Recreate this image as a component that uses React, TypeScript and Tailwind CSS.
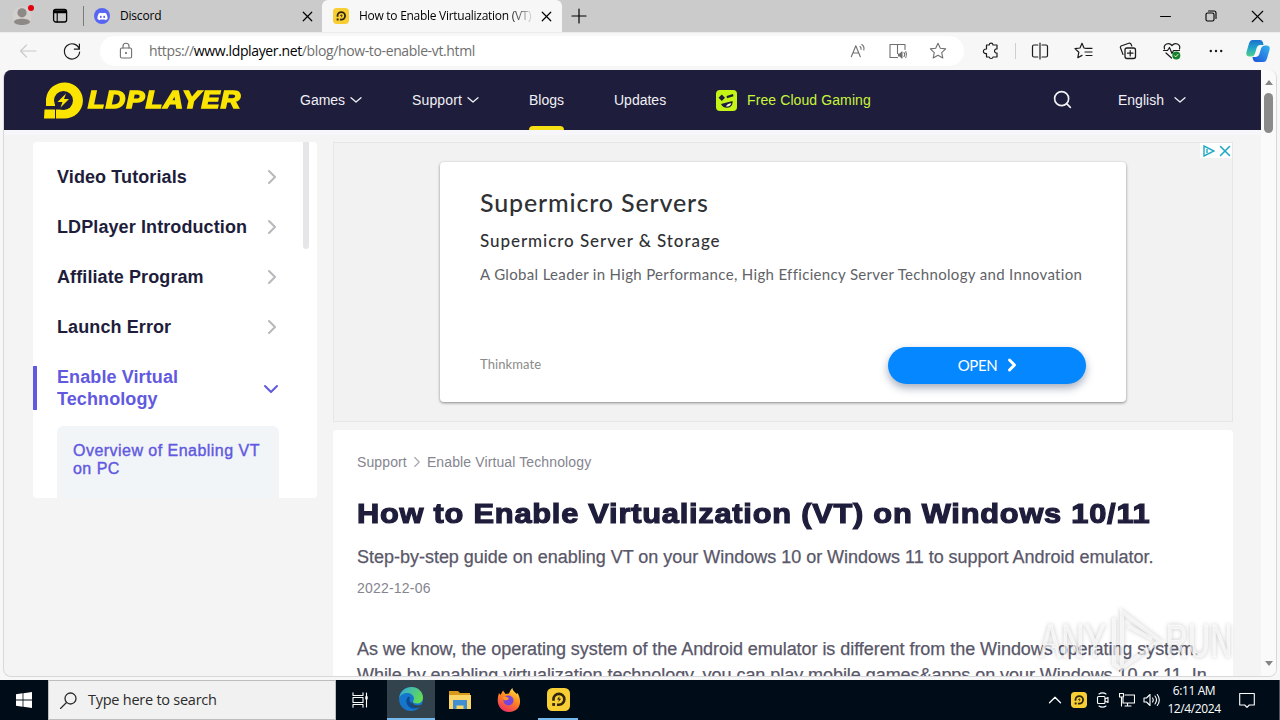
import type { ReactNode } from "react";
import { ChevronDown, ChevronRight, ChevronUp, Minus, Plus, Search, X } from "lucide-react";
import { FaDiscord } from "react-icons/fa";

const ui = "font-['Open_Sans','Noto_Sans',sans-serif]";
const arial = "font-['Liberation_Sans',Arial,sans-serif]";
const product = "font-['Lato','Roboto',sans-serif]";

const sections = ["Video Tutorials", "LDPlayer Introduction", "Affiliate Program", "Launch Error"];

function LdMark({ className, fill = "#fbe500", hole = "#1e1d3b" }: { className?: string; fill?: string; hole?: string }) {
  return (
    <svg viewBox="0 0 39 37" className={className}>
      <path d="M2 24V17A18.5 18 0 1 1 20 36.5H12V27.5H20A8.5 8.5 0 1 0 11 18V24Z" fill={fill} />
      <path d="M0.5 27.5H11V36.5H0Z" fill={fill} />
      <circle cx="19.5" cy="18.5" r="9.5" fill={hole} />
      <path d="M22 11.5 13.5 20H18.5L16.5 25.5 25 17H20Z" fill={fill} />
    </svg>
  );
}

/* Yellow rounded app icon, used in tab and taskbar */
function LdApp({ className }: { className?: string }) {
  return (
    <svg viewBox="0 0 22 22" className={className}>
      <rect width="22" height="22" rx="5" fill="#f7cf35" />
      <path d="M6.2 12.2V10.8A5.2 5.2 0 1 1 11.4 16H9.5" fill="none" stroke="#30240f" strokeWidth="2.5" />
      <path d="M5 14.4h2.7v2.7H5Z" fill="#30240f" />
      <path d="m11.8 8-2.2 3h1.8l-.6 2.4 2.8-3.2h-1.8Z" fill="#30240f" />
    </svg>
  );
}

function Stroke({ children, className, box = "0 0 20 20" }: { children: ReactNode; className?: string; box?: string }) {
  return (
    <svg viewBox={box} className={className} fill="none" stroke="currentColor" strokeWidth="1.1" strokeLinejoin="round" strokeLinecap="round">
      {children}
    </svg>
  );
}

function NavArrow({ className }: { className?: string }) {
  return (
    <Stroke className={className} box="0 0 14 14">
      <path d="m2 4.700 5 4.300 5-4.300" strokeWidth="1.300" />
    </Stroke>
  );
}

function TabStrip() {
  return (
    <div className={`flex h-8 shrink-0 items-center bg-[#cbcbcb] text-[12px] text-black ${ui}`}>
      <div className="relative ml-3 h-5 w-5">
        <svg viewBox="0 0 20 20" className="h-5 w-5">
          <circle cx="10" cy="10" r="9.5" fill="#d3d0cd" />
          <circle cx="10" cy="6.8" r="4.600" fill="#8c8987" />
          <path d="M2 16C2 11.500 18 11.500 18 16 17 20 3 20 2 16Z" fill="#8c8987" />
        </svg>
        <span className="absolute -top-[1px] left-4 h-1.5 w-1.5 rounded-full bg-[#e3000f]" />
      </div>
      <Stroke className="ml-[20px] h-4 w-4" box="0 0 16 16">
        <rect x="1.6" y="1.500" width="13" height="12.5" rx="2.2" strokeWidth="1.3" />
        <path d="M2.300 3.200h11.600M2.300 4.400h11.600" strokeWidth="1.800" />
        <path d="M5.2 5v9" />
      </Stroke>
      <div className="ml-[15px] h-5 w-px bg-[#7b7b7b]" />
      <div className="ml-[10px] flex h-4 w-4 items-center justify-center rounded-full bg-[#5865f2] text-white">
        <FaDiscord size={11} />
      </div>
      <span className="ml-[10px] w-[179px] tracking-[-0.2px]">Discord</span>
      <X className="h-[17px] w-[17px]" strokeWidth={1.700} />
      <div className="ml-[6px] flex h-8 w-[240px] items-center rounded-t-md bg-[#f7f7f7]">
        <LdApp className="ml-[11px] h-4 w-4" />
        <span className="ml-[10px] w-[174px] whitespace-nowrap tracking-[-0.28px] [mask-image:linear-gradient(90deg,#000_150px,transparent_176px)]">
          How to Enable Virtualization (VT)
        </span>
        <X className="ml-[5px] h-[17px] w-[17px]" strokeWidth={1.700} />
      </div>
      <Plus className="ml-[5px] h-6 w-6" strokeWidth={1.200} />
      <Minus className="ml-auto h-[17px] w-[17px]" strokeWidth={1.500} />
      <Stroke className="ml-[31px] h-[12px] w-[12px]" box="0 0 12 12">
        <rect x="1" y="3" width="8" height="8" rx="1.5" />
        <path d="M3.5 1H9a2 2 0 0 1 2 2v5.5" />
      </Stroke>
      <X className="mr-[12px] ml-[30px] h-[21px] w-[21px]" strokeWidth={1.300} />
    </div>
  );
}

function Toolbar() {
  return (
    <div className={`flex h-[38px] shrink-0 items-center border-t border-[#ececec] bg-[#f7f7f7] pb-px text-[#1b1b1b] ${ui}`}>
      <Stroke className="ml-[18px] h-5 w-5 text-[#c9c9c9]">
        <path d="M18 10H2.5M8.5 4 2.5 10l6 6" />
      </Stroke>
      <Stroke className="ml-[24px] h-5 w-5">
        <path d="M17.3 8.2A7.6 7.6 0 1 0 17.6 11M17.4 3v5.2h-5" strokeWidth="1.200" />
      </Stroke>
      <div className="ml-[18px] flex h-[30px] w-[864px] items-center rounded-full bg-white text-[#6f6f6f]">
        <Stroke className="ml-[16px] h-5 w-5">
          <rect x="4.4" y="7" width="11.2" height="10" rx="1.5" />
          <path d="M7 7V5.2a3 3 0 0 1 6 0V7" />
          <circle cx="10" cy="12" r=".5" fill="currentColor" />
        </Stroke>
        <span className="ml-[13px] w-[697px] pb-px whitespace-nowrap text-[14px] tracking-[-0.37px]">
          https://<span className="text-black">www.ldplayer.net</span>/blog/how-to-enable-vt.html
        </span>
        <Stroke className="ml-[2px] h-5 w-5">
          <path d="m3.3 15.8 4.5-11 4.5 11M4.8 12h6M12 5.5c1 .7 1.3 1.800 1 3M13.800 3.500c2 1.400 2.500 3.400 2 5.500" />
        </Stroke>
        <Stroke className="ml-[20px] h-5 w-5">
          <path d="M9.500 16.500H2V3.500h7.500v9M9.500 3.500H17v5" />
          <path d="M10.500 13h1.500l2-2v6l-2-2h-1.500Z" fill="currentColor" />
          <path d="M16 11.500c.8 1 .8 3 0 4M17.800 10.500c1 2 1 4 0 6" />
        </Stroke>
        <Stroke className="ml-[20px] h-5 w-5">
          <path d="m10 2.300 2.300 5 5.400.6-4 3.700 1.100 5.400-4.800-2.700L5.200 17l1.100-5.400-4-3.700 5.400-.6Z" />
        </Stroke>
      </div>
      <Stroke className="ml-[17px] h-5 w-5">
        <path d="M5.500 4h2.700c.2-2.400 3.600-2.400 3.800 0H16v4c-3-.5-3.600 4 0 4v4h-4c-.3 2-3.500 2-3.800 0H5.500v-3.500C1.500 13.200 1.300 7.700 5.500 8Z" strokeWidth="1.2" />
      </Stroke>
      <div className="ml-[14px] h-4 w-px bg-[#cfcfcf]" />
      <Stroke className="ml-[14px] h-5 w-5">
        <path d="M7.800 4H4Q2.500 4 2.500 5.500v9Q2.500 16 4 16h3.800M12 4h4q1.500 0 1.500 1.500v9q0 1.500-1.500 1.500h-4M10 2v16" strokeWidth="1.200" />
      </Stroke>
      <Stroke className="ml-[24px] h-5 w-5">
        <path d="M12 7.500 10 7 8 2.300 6 7l-5 .6 3.800 3.700-1 5.400L8 14.400M12 7.300h6M11 11h7M12 14.500h6" strokeWidth="1.200" />
      </Stroke>
      <Stroke className="ml-[24px] h-5 w-5">
        <rect x="7" y="7" width="10.500" height="10.500" rx="2" strokeWidth="1.300" />
        <path d="M12.200 9.500v5.500M9.500 12.200H15M5 13.500 2.300 6.300 3 5l8.500-3 1.300.700 1 2.300" strokeWidth="1.200" />
      </Stroke>
      <Stroke className="ml-[24px] h-5 w-5">
        <path d="M2.500 8C1 3 7 .8 10 4.500 13 .8 19 3 17.500 8M1.500 9.500h4l2-3 2.500 6 1.500-3h6M4 12l5.500 5" strokeWidth="1.200" />
        <circle cx="14.300" cy="14.500" r="4" fill="#18802a" stroke="none" />
        <path d="m12.500 14.700 1.200 1.200 2.300-2.500" stroke="#fff" strokeWidth=".900" />
      </Stroke>
      <svg viewBox="0 0 20 20" className="ml-[24px] h-5 w-5" fill="currentColor">
        <circle cx="4.800" cy="10" r="1.200" />
        <circle cx="10" cy="10" r="1.200" />
        <circle cx="15.200" cy="10" r="1.200" />
      </svg>
      <svg viewBox="0 0 24 24" className="ml-[20px] h-6 w-6">
        <defs>
          <linearGradient id="cpA" x1="0" y1="0" x2="0" y2="1">
            <stop offset="0" stopColor="#1b6fd0" />
            <stop offset=".5" stopColor="#22a6c8" />
            <stop offset="1" stopColor="#4fd18b" />
          </linearGradient>
          <linearGradient id="cpB" x1="1" y1="0" x2="0" y2="1">
            <stop offset="0" stopColor="#35b4f0" />
            <stop offset="1" stopColor="#1d50d8" />
          </linearGradient>
        </defs>
        <path d="M6.500 1H14q2 0 2.800 2l.8 3H14q-2.500 0-3.300 2.800L8.800 15Q8 17.500 5 17.500H3.500Q-.5 17.500.5 13L3 4.500Q4 1 6.500 1Z" fill="url(#cpA)" />
        <path d="M17.500 23H10q-2 0-2.800-2l-.8-3H10q2.500 0 3.300-2.800L15.200 9Q16 6.500 19 6.500h1.500q4 0 3 4.500L21 19.500Q20 23 17.500 23Z" fill="url(#cpB)" />
      </svg>
    </div>
  );
}

function SiteNav() {
  return (
    <nav className="flex h-[60px] shrink-0 items-center whitespace-nowrap bg-[#1e1d3b] text-[14px] text-[#f0f0f5]">
      <div className="ml-10 flex w-[256px] items-center">
        <LdMark className="h-[37px] w-[39px]" />
        <span className="ml-[5px] origin-left scale-x-[1.1] text-[24.5px] leading-none font-bold tracking-[1.15px] text-[#fbe500] italic [-webkit-text-stroke:1.7px_#fbe500]">LDPLAYER</span>
      </div>
      <div className="flex w-[112px] items-center">
        Games <NavArrow className="ml-[4px] h-[14px] w-[14px]" />
      </div>
      <div className="flex w-[117px] items-center tracking-[0.15px]">
        Support <NavArrow className="ml-[4px] h-[14px] w-[14px]" />
      </div>
      <div className="relative flex h-full w-[85px] items-center">
        Blogs
        <span className="absolute bottom-0 left-0 h-1 w-[35px] rounded-t bg-[#f5e015]" />
      </div>
      <div className="w-[102px]">Updates</div>
      <svg viewBox="0 0 21 21" className="h-[21px] w-[21px]">
        <rect width="21" height="21" rx="4" fill="#c5f516" />
        <path d="M5.800 4.500 9 7.700 5.800 11 2.500 7.700ZM10.500 6l6.500-2 .5 2.300-6.500 1.900Z" fill="#1e1d3b" />
        <path d="M5 14 16.500 11c.5 3-1 6.500-5 6.800-2.800.2-5-1-6.500-3.800Z" fill="#1e1d3b" />
        <path d="M10 16.200c1-2 3-3 5.300-3-.5 2.300-2.500 3.700-5.300 3Z" fill="#eef8d0" />
      </svg>
      <span className="ml-[10px] w-[306px] tracking-[0.1px] text-[#c9f53c]">Free Cloud Gaming</span>
      <Search className="-ml-px h-[21px] w-[21px] -translate-y-px" strokeWidth={1.900} />
      <span className="ml-[45px] w-[55px]">English</span>
      <NavArrow className="h-[14px] w-[14px]" />
    </nav>
  );
}

function Sidebar() {
  return (
    <aside className="flex h-[356px] w-[284px] shrink-0 overflow-hidden rounded bg-white">
      <div className="flex w-[246px] flex-col text-[18px] font-bold tracking-[0.1px] text-[#1e1d3b]">
        {sections.map((s, i) => (
          <div key={s} className={`flex h-[22px] items-center justify-between pl-6 ${i ? "mt-7" : "mt-[24px]"}`}>
            {s}
            <ChevronRight className="-mr-[5px] h-6 w-6 text-[#b9b9bd]" strokeWidth={2.100} />
          </div>
        ))}
        <div className="mt-7 flex h-11 items-center justify-between border-l-4 border-[#6159e0] pl-5 leading-[22px] text-[#6159e0]">
          <span>
            Enable Virtual
            <br />
            Technology
          </span>
          <ChevronDown className="-mr-1 h-6 w-6 translate-y-px" strokeWidth={2} />
        </div>
        <div className="mt-4 ml-6 h-[80px] rounded-t-md bg-[#f2f5f8] px-4 pt-4 text-[16px] leading-[18px] font-normal tracking-[0.47px] whitespace-nowrap text-[#6159e0] [-webkit-text-stroke:0.4px_#6159e0]">
          Overview of Enabling VT
          <br />
          on PC
        </div>
      </div>
      <div className="ml-[24px] h-[107px] w-[6px] rounded-b bg-[#e6e6e8]" />
    </aside>
  );
}

function Advert() {
  return (
    <div className="relative h-[280px] shrink-0 border border-[#e6e6e6] bg-[#f2f2f2] pt-[19px] pl-[106px]">
      <div className={`flex h-[240px] w-[686px] flex-col rounded bg-white px-10 whitespace-nowrap shadow-[0_1px_3px_rgba(0,0,0,0.45)] ${product}`}>
        <h2 className="mt-[25px] text-[25px] leading-[30px] font-medium tracking-[0.85px] text-[#303134]">Supermicro Servers</h2>
        <h3 className="mt-[13px] text-[17px] leading-[22px] font-medium tracking-[0.94px] text-[#303134]">Supermicro Server &amp; Storage</h3>
        <p className="mt-[12px] text-[15px] leading-5 tracking-[0.33px] text-[#5f6368]">
          A Global Leader in High Performance, High Efficiency Server Technology and Innovation
        </p>
        <div className="mt-[63px] flex items-center justify-between">
          <span className="pb-[2px] text-[13px] tracking-[0.1px] text-[#8a8a8a]">Thinkmate</span>
          <div className="flex h-[37px] w-[198px] items-center justify-center rounded-full bg-[#0587ff] pb-px pl-[6px] text-[15px] text-white shadow-[0_4px_9px_rgba(30,50,90,0.4)]">
            <span className="tracking-[-0.4px]">OPEN</span>
            <ChevronRight className="ml-[5px] h-5 w-5" strokeWidth={3.600} />
          </div>
        </div>
      </div>
      <div className="absolute top-0 right-0 flex h-[15px] w-[32px] items-center gap-px bg-white pl-[3px] text-[#1fa9c4]">
        <svg viewBox="0 0 12 12" className="h-[12px] w-[12px] shrink-0" fill="none" stroke="currentColor" strokeWidth="1.400">
          <path d="M1 1v10l10-5ZM4 4v4" />
        </svg>
        <X className="-mr-[3px] h-[18px] w-[18px] shrink-0" strokeWidth={2.100} />
      </div>
    </div>
  );
}

function Article() {
  return (
    <article className="mt-[8px] flex-1 rounded-t bg-white pl-6 whitespace-nowrap text-[#595769]">
      <div className="mt-[24px] flex h-4 items-center text-[14px] tracking-[0.12px] text-[#85858f]">
        Support
        <ChevronRight className="mx-px h-[18px] w-[18px] text-[#a5a5ad]" strokeWidth={1.500} />
        Enable Virtual Technology
      </div>
      <h1 className="mt-[26px] origin-left scale-x-[1.1] text-[28px] leading-[36px] font-black tracking-[0.69px] text-[#1e1d3b] [-webkit-text-stroke:1.2px_#1e1d3b]">
        How to Enable Virtualization (VT) on Windows 10/11
      </h1>
      <p className="mt-[13px] text-[18px] leading-[24px] tracking-[-0.015px] [-webkit-text-stroke:0.25px_#595769]">
        Step-by-step guide on enabling VT on your Windows 10 or Windows 11 to support Android emulator.
      </p>
      <time className="mt-[11px] block text-[14px] leading-4 tracking-[0.2px] text-[#85858f]">2022-12-06</time>
      <p className="mt-[40px] text-[18px] leading-[26px] tracking-[-0.05px] [-webkit-text-stroke:0.25px_#595769]">
        As we know, the operating system of the Android emulator is different from the Windows operating system.
        <br />
        While by enabling virtualization technology, you can play mobile games&amp;apps on your Windows 10 or 11. In
      </p>
    </article>
  );
}

function Watermark() {
  return (
    <div className="absolute top-[538px] left-[1036px] flex h-[66px] items-center text-[46px] leading-none text-white/65 drop-shadow-[0_0_2px_rgba(0,0,0,0.3)]">
      <span className="w-[66px] origin-left scale-x-[0.68] tracking-[1px] [-webkit-text-stroke:1px_rgba(255,255,255,0.6)]">ANY</span>
      <svg viewBox="0 0 58 66" className="h-[66px] w-[58px]" fill="none" stroke="currentColor" strokeWidth="4">
        <path d="M16 4v56l38-27ZM8 10v46l9 6M22 18l24 13" />
      </svg>
      <span className="ml-[2px] origin-left scale-x-[0.65] tracking-[1px] [-webkit-text-stroke:1px_rgba(255,255,255,0.6)]">RUN</span>
    </div>
  );
}

function Taskbar() {
  return (
    <footer className={`flex h-10 shrink-0 items-center bg-[#000d18] text-white ${ui}`}>
      <div className="flex h-full w-12 items-center justify-center">
        <svg viewBox="0 0 16 16" className="h-4 w-4" fill="#fff">
          <path d="M0 2.300 6.600 1.300v6.300H0ZM7.400 1.200 16 0v7.600H7.400ZM0 8.400h6.600v6.300L0 13.700ZM7.400 8.400H16V16l-8.600-1.200Z" />
        </svg>
      </div>
      <div className="flex h-full w-[288px] items-center border border-[#bdbdbd] bg-[#f1f1f1] text-[#2b2b2b]">
        <Stroke className="ml-[11px] h-[17px] w-[17px]" box="0 0 17 17">
          <circle cx="10.500" cy="6.500" r="5.500" strokeWidth="1.300" />
          <path d="m6.500 10.500-6 6" strokeWidth="1.300" />
        </Stroke>
        <span className="ml-[11px] text-[14.500px] tracking-[-0.25px] whitespace-nowrap">Type here to search</span>
      </div>
      <div className="flex h-full w-[51px] items-center justify-center">
        <Stroke className="-ml-[4px] h-4 w-4" box="0 0 16 16">
          <path d="M1 .8v2.700h10V.8M1 15.200v-2.700h10v2.700M1 5.500h10v5H1ZM14.500 1v14" />
          <path d="M14.500 5v1.500" strokeWidth="2.400" />
        </Stroke>
      </div>
      <div className="flex h-full w-12 items-center justify-center border-b-2 border-[#76b9ed] bg-[#33434d]">
        <svg viewBox="0 0 24 24" className="h-6 w-6">
          <defs>
            <linearGradient id="edgeTop" x1="0" y1="0" x2="1" y2=".5">
              <stop offset="0" stopColor="#2fa7e0" />
              <stop offset="1" stopColor="#62d957" />
            </linearGradient>
          </defs>
          <circle cx="12" cy="12" r="12" fill="#1576cc" />
          <path d="M.2 11C1.500 3.500 7 0 12.500 0 19 0 24 5 24 10.500c0 4-3 6-6 6-2.500 0-4-1-4-2 0-.8 1-1.200 1-3C15 8 11 6 8 6 4 6 1 8.500.2 11Z" fill="url(#edgeTop)" />
          <path d="M9.500 9.500C5 13 8 20.500 13.500 21.500 17 22 20.500 20 22 18.500 15 20.500 8.500 15 11 10.500Z" fill="#0c4b93" />
          <path d="M22.500 17.500c-3 1.500-9 1.500-9.500-3l-1 2c1 4 6 5 9 3.500Z" fill="#33434d" />
        </svg>
      </div>
      <div className="flex h-full w-[49px] items-center justify-center">
        <svg viewBox="0 0 22 20" className="h-5 w-[22px]">
          <path d="M0 1h9l2 2h10v4H0Z" fill="#d99a1c" />
          <path d="M0 5h22v14H0Z" fill="#fbd667" />
          <path d="M4 10h14v9h-3.500v-3.500h-7V19H4Z" fill="#3f8fd2" />
        </svg>
      </div>
      <div className="flex h-full w-[49px] items-center justify-center">
        <svg viewBox="0 0 24 24" className="h-6 w-6">
          <defs>
            <linearGradient id="fox" x1=".8" y1="0" x2=".3" y2="1">
              <stop offset="0" stopColor="#ffe14a" />
              <stop offset=".45" stopColor="#ff8a1e" />
              <stop offset="1" stopColor="#ee2f62" />
            </linearGradient>
          </defs>
          <path d="M2 5 3.500 7 6 2.500 8.500 6 12 5.500C13 3 14 1 15.500 0c0 3 3 4 4 6l1-1c5 8 3 19-8.500 19C2 24-1.500 14 2 5Z" fill="url(#fox)" />
          <circle cx="11.500" cy="12.500" r="5" fill="#7744dc" />
          <path d="M5.500 10.500c2-3 5-1.500 6.500 0-1 2-3 1.500-4 2Z" fill="#ff9726" />
        </svg>
      </div>
      <div className="ml-[5px] flex h-full w-10 items-center justify-center border-b-2 border-[#76b9ed]">
        <LdApp className="h-[23px] w-[23px]" />
      </div>
      <ChevronUp className="ml-auto h-[22px] w-[22px]" strokeWidth={1.400} />
      <LdApp className="ml-[5px] h-4 w-4" />
      <Stroke className="ml-[8px] h-4 w-4" box="0 0 16 16">
        <rect x="2.500" y="4.500" width="7.500" height="7" rx="1" />
        <path d="m10 7 3-1.500v5L10 9M4 2c2-1.300 5-1.300 7 0M4 14c2 1.300 5 1.300 7 0" />
      </Stroke>
      <Stroke className="ml-[8px] h-4 w-4" box="0 0 16 16">
        <path d="M6 3h9.500v8H4V6M8.500 11v3M6 14h6M.500 1.500h4V5h-4ZM2.500 5v9" />
      </Stroke>
      <Stroke className="ml-[8px] h-4 w-[17px]" box="0 0 17 16">
        <path d="M1 6h2.500L7 2.500v11L3.500 10H1ZM9.500 6q1.500 2 0 4M12 4q3 4 0 8M14.300 2.500q4 5.500 0 11" />
      </Stroke>
      <div className="ml-[3px] w-[62px] text-center text-[12px] leading-[18px] tracking-[-0.4px] whitespace-nowrap">
        6:11 AM
        <br />
        12/4/2024
      </div>
      <Stroke className="mr-[24px] ml-[14px] h-4 w-4" box="0 0 16 16">
        <path d="M.7 1.500h14.600v11.500h-5L8 15.300 5.700 13h-5Z" />
      </Stroke>
      <div className="h-full w-px bg-[#4c565e]" />
    </footer>
  );
}

export default function App() {
  return (
    <div className="flex h-[720px] w-[1280px] flex-col overflow-hidden bg-[#f7f7f7]">
      <TabStrip />
      <Toolbar />
      <div className="h-[610px] shrink-0 px-[3px]">
        <div className={`relative flex h-[607px] overflow-hidden rounded-lg border-x border-b border-[#d8d8da] bg-[#f4f4f4] ${arial}`}>
          <div className="flex w-[1257px] shrink-0 flex-col">
            <SiteNav />
            <div className="h-[5px] shrink-0 bg-[#f6f6fb]" />
            <div className="flex flex-1 items-start gap-[16px] pt-[7px] pl-[29px]">
              <Sidebar />
              <main className="flex h-[535px] w-[900px] flex-col">
                <Advert />
                <Article />
              </main>
            </div>
          </div>
          <div className="flex flex-1 flex-col items-center bg-[#fafafa]">
            <svg viewBox="0 0 8 5" className="mt-[10px] h-[5px] w-2">
              <path d="M4 0 8 5H0Z" fill="#858585" />
            </svg>
            <div className="mt-[8px] h-10 w-[9px] rounded-full bg-[#8a8a8a]" />
            <svg viewBox="0 0 8 5" className="mt-auto mb-[10px] h-[5px] w-2">
              <path d="M0 0h8L4 5Z" fill="#858585" />
            </svg>
          </div>
          <Watermark />
        </div>
      </div>
      <Taskbar />
    </div>
  );
}
